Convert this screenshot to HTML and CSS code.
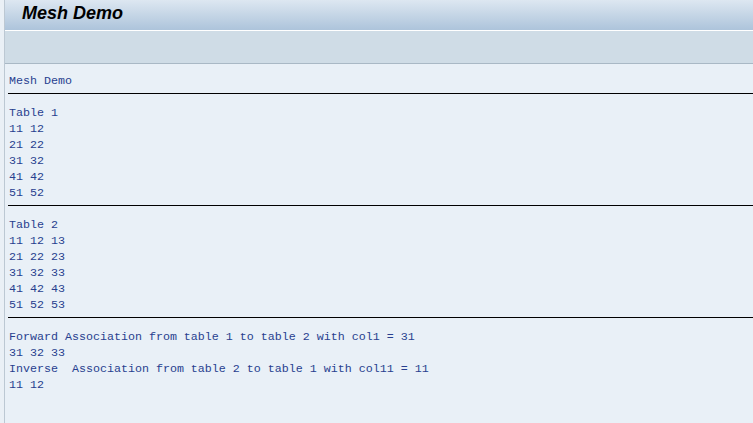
FILE: index.html
```html
<!DOCTYPE html>
<html>
<head>
<meta charset="utf-8">
<title>Mesh Demo</title>
<link rel="stylesheet" href="styles.css">
</head>
<body>
<div class="screen">
  <div class="titlebar"><span class="title">Mesh Demo</span></div>
  <div class="toolbar"></div>
  <div class="list">
    <div class="row">Mesh Demo</div>
    <div class="uline"></div>
    <div class="row">Table 1</div>
    <div class="row">11 12</div>
    <div class="row">21 22</div>
    <div class="row">31 32</div>
    <div class="row">41 42</div>
    <div class="row">51 52</div>
    <div class="uline"></div>
    <div class="row">Table 2</div>
    <div class="row">11 12 13</div>
    <div class="row">21 22 23</div>
    <div class="row">31 32 33</div>
    <div class="row">41 42 43</div>
    <div class="row">51 52 53</div>
    <div class="uline"></div>
    <div class="row">Forward Association from table 1 to table 2 with col1 = 31</div>
    <div class="row">31 32 33</div>
    <div class="row">Inverse  Association from table 2 to table 1 with col11 = 11</div>
    <div class="row">11 12</div>
  </div>
</div>
</body>
</html>
```
FILE: styles.css
```css
html, body {
  margin: 0;
  padding: 0;
  height: 100%;
  background: #eaf0f6;
  overflow: hidden;
}
.screen {
  margin-left: 4px;
  border-left: 1px solid #bcc8d3;
  height: 423px;
  display: flex;
  flex-direction: column;
  background: #e9f0f7;
}
.titlebar {
  height: 30px;
  background: linear-gradient(#dde7f1, #adc4db);
  border-bottom: 1px solid #ffffff;
  display: flex;
  align-items: center;
  padding-left: 17px;
}
.title {
  font-family: "Liberation Sans", Arial, sans-serif;
  font-weight: bold;
  font-style: italic;
  font-size: 18px;
  color: #000;
  position: relative;
  top: -2px;
}
.toolbar {
  height: 32px;
  background: #cfdce6;
  border-bottom: 1px solid #a9b8c5;
}
.list {
  padding: 9px 0 0 3px;
  font-family: "Liberation Mono", "Courier New", monospace;
  font-size: 11.67px;
  line-height: 16px;
  color: #283f8f;
}
.row {
  height: 16px;
  white-space: pre;
  padding-left: 1px;
}
.uline {
  height: 16px;
  position: relative;
}
.uline::before {
  content: "";
  position: absolute;
  left: 0;
  right: 0;
  top: 4px;
  height: 1px;
  background: #000;
}
```
